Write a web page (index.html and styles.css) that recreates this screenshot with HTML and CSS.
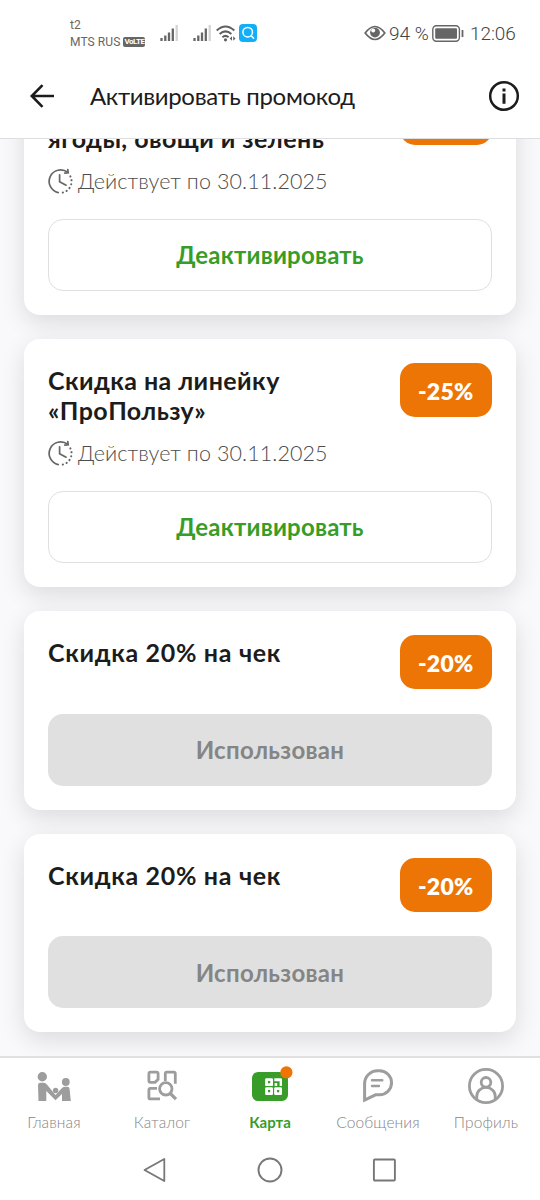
FILE: index.html
```html
<!DOCTYPE html>
<html lang="ru">
<head>
<meta charset="utf-8">
<title>Активировать промокод</title>
<link rel="stylesheet" href="styles.css">
</head>
<body>
<svg width="0" height="0" class="defs">
  <symbol id="clock" viewBox="0 0 25 26"><g fill="none" stroke="#666" stroke-width="1.7" stroke-linecap="round"><path d="M10.2 24.6A11.5 11.5 0 1 1 19.6 4.2"/><path d="M16.8 5.2l3.4-.4-.4-3.2" /><path d="M11.6 6.8v7l6.5 3.4"/><path d="M22.4 8.4A11.5 11.5 0 0 1 12.6 24.9" stroke-width="2.1" stroke-dasharray=".1 3.9"/></g></symbol>
  <symbol id="signal" viewBox="0 0 18 17"><g stroke="#666" stroke-width="2.3"><path d="M1.5 16v-3M5.3 16v-5.5M9 16V7.5M12.8 16V3.5"/><path d="M16.7 16V0" stroke="#d3d3d3"/></g></symbol>
</svg>
<div class="screen">
  <div class="status">
    <div class="carriers"><span class="carrier">t2</span><span class="carrier">MTS RUS <b class="volte">VoLTE</b></span></div>
    <svg class="sig1" width="18" height="17"><use href="#signal"/></svg>
    <svg class="sig2" width="18" height="17"><use href="#signal"/></svg>
    <svg class="wifi" width="20" height="17" viewBox="0 0 20 17"><g fill="none" stroke="#5f5f5f" stroke-width="2"><path d="M.7 5.5Q9.5-2.6 18.3 5.5M3.6 9Q9.5 3.8 15.4 9M6.4 12.2q3.1-2.6 6.2 0"/></g><circle cx="9.5" cy="14.8" r="1.6" fill="#5f5f5f"/><path d="M16 11.2v4.6l-2.3-2.3zM17.2 11.2v4.6l2.3-2.3z" fill="#5f5f5f"/></svg>
    <svg class="search" width="18" height="18" viewBox="0 0 18 18"><rect width="18" height="18" rx="4" fill="#10aff8"/><circle cx="8.7" cy="8.2" r="4.8" fill="none" stroke="#fff" stroke-width="1.5"/><path d="M12.2 11.7l2.4 2.5" stroke="#fff" stroke-width="1.6" stroke-linecap="round"/></svg>
    <svg class="eye" width="22" height="16" viewBox="0 0 22 16"><path d="M1.2 8Q11-5 20.8 8 11 21 1.2 8z" fill="none" stroke="#666" stroke-width="1.7"/><circle cx="11" cy="7.6" r="4.9" fill="#666"/><circle cx="9.2" cy="5.6" r="2" fill="#fff"/></svg>
    <span class="pct">94 %</span>
    <svg class="battery" width="32" height="17" viewBox="0 0 32 17"><rect x=".8" y=".8" width="26.6" height="15.4" rx="3.6" fill="none" stroke="#666" stroke-width="1.4"/><rect x="3.2" y="3.2" width="21.8" height="10.6" rx="1" fill="#666"/><path d="M30.5 5v7" stroke="#666" stroke-width="1.8"/></svg>
    <span class="time">12:06</span>
  </div>
  <header class="header">
    <svg class="back" width="26" height="26" viewBox="0 0 26 26"><path d="M13.5 2.2L2.8 13l10.7 10.8M2.8 13H25" fill="none" stroke="#1c1c1c" stroke-width="2.6"/></svg>
    <h1 class="title">Активировать промокод</h1>
    <svg class="info" width="32" height="32" viewBox="0 0 32 32"><circle cx="16" cy="16" r="13.8" fill="none" stroke="#1c1c1c" stroke-width="2.5"/><path d="M16 13.6v10.2M16 8.5v3" stroke="#1c1c1c" stroke-width="3"/></svg>
  </header>
  <main class="list">
    <article class="card first">
      <div class="top"><h2 class="name">ягоды, овощи и зелень</h2><span class="badge"></span></div>
      <div class="date"><svg width="25" height="26"><use href="#clock"/></svg><span>Действует по 30.11.2025</span></div>
      <button class="btn">Деактивировать</button>
    </article>
    <article class="card">
      <div class="top"><h2 class="name">Скидка на линейку<br>«ПроПользу»</h2><span class="badge">-25%</span></div>
      <div class="date"><svg width="25" height="26"><use href="#clock"/></svg><span>Действует по 30.11.2025</span></div>
      <button class="btn">Деактивировать</button>
    </article>
    <article class="card">
      <div class="top"><h2 class="name short">Скидка 20% на чек</h2><span class="badge">-20%</span></div>
      <button class="btn used">Использован</button>
    </article>
    <article class="card">
      <div class="top"><h2 class="name short">Скидка 20% на чек</h2><span class="badge">-20%</span></div>
      <button class="btn used">Использован</button>
    </article>
  </main>
  <nav class="tabs">
    <a class="tab"><svg width="40" height="40" viewBox="0 0 40 40" fill="#9d9d9d"><circle cx="8.3" cy="10.7" r="4.7"/><circle cx="31.8" cy="16" r="3.9"/><circle cx="21.6" cy="24.5" r="2.7"/><path d="M4 19q0-2.2 2.5-2.2h3.2q2 0 3.2 1.6L21.5 29l6-6.5q1.3-1.7 3.1-1.7h2.8q2 0 2.2 2.2l1.2 12H28v-7l-6.5 6.3L12.3 25v10H4.5z"/></svg><span>Главная</span></a>
    <a class="tab"><svg width="40" height="40" viewBox="0 0 40 40" fill="none" stroke="#9d9d9d" stroke-width="2.8"><path d="M8.4 6.2h6.2q1.5 0 1.5 1.5v5.6l-3 3H8.4q-1.5 0-1.5-1.5V7.7q0-1.5 1.5-1.5zM23.3 15V7.7q0-1.5 1.5-1.5h7q1.5 0 1.5 1.5v10M15 22.4H8.4q-1.5 0-1.5 1.5v7.5q0 1.5 1.5 1.5H18"/><circle cx="23.8" cy="22.8" r="6.2"/><path d="M28.3 27.5l5.7 5.7" stroke-width="3.2"/></svg><span>Каталог</span></a>
    <a class="tab active"><svg width="40" height="40" viewBox="0 0 40 40"><rect x="2" y="6" width="36" height="29" rx="6" fill="#379d28"/><path fill="#fff" d="M16.3 12.2h5.5q1.2 0 1.2 1.2v5.5q0 1.2-1.2 1.2h-5.5q-1.2 0-1.2-1.2v-5.5q0-1.2 1.2-1.2zM24.3 12.2h6.5q1.2 0 1.2 1.2v6.7h-2.4v-4.9h-5.3zM24.6 17h2.6v3.1h-2.6zM16.3 21.3h5.5q1.2 0 1.2 1.2v5.3q0 1.2-1.2 1.2h-5.5q-1.2 0-1.2-1.2v-5.3q0-1.2 1.2-1.2zM25.3 21.3h5.5q1.2 0 1.2 1.2v5.3q0 1.2-1.2 1.2h-5.5q-1.2 0-1.2-1.2v-5.3q0-1.2 1.2-1.2z"/><path fill="#379d28" d="M18 15h2.2v2.2H18zM18 24h2.2v2.2H18zM27 24h2.2v2.2H27z"/><circle cx="36.4" cy="6.4" r="6.1" fill="#ec7505"/></svg><span>Карта</span></a>
    <a class="tab"><svg width="40" height="40" viewBox="0 0 40 40" fill="none" stroke="#9d9d9d" stroke-width="3"><path d="M6.6 34V17.5A13 13 0 0 1 19.5 4.7h2a12 12 0 0 1 0 24.1h-4z"/><path d="M14 14.3h10.3M14 20h7" stroke-linecap="round" stroke-width="2.4"/></svg><span>Сообщения</span></a>
    <a class="tab"><svg width="40" height="40" viewBox="0 0 40 40" fill="none" stroke="#9d9d9d" stroke-width="2.8"><circle cx="20" cy="20" r="16.6"/><circle cx="20" cy="16.3" r="4.8"/><path d="M10.8 33v-3a9.2 8.6 0 0 1 18.4 0v3"/></svg><span>Профиль</span></a>
  </nav>
  <div class="sysnav">
    <svg width="24" height="28" viewBox="0 0 24 28"><path d="M21.3 3v22L1.5 14z" fill="none" stroke="#777" stroke-width="1.8" stroke-linejoin="round"/></svg>
    <svg width="26" height="26" viewBox="0 0 26 26"><circle cx="13" cy="13" r="11.5" fill="none" stroke="#777" stroke-width="1.9"/></svg>
    <svg width="24" height="24" viewBox="0 0 24 24"><rect x=".9" y="1.5" width="21" height="21" rx="1" fill="none" stroke="#777" stroke-width="1.9"/></svg>
  </div>
</div>
</body>
</html>
```
FILE: styles.css
```css
* { box-sizing: border-box; margin: 0; padding: 0; }
body { font-family: "Lato", "Open Sans", sans-serif; background: #fff; color: #1c1c1c; }
svg { display: block; flex: none; overflow: visible; }
.defs { position: absolute; }
.screen { width: 540px; height: 1200px; display: flex; flex-direction: column; overflow: hidden; }
.status { height: 64px; display: flex; align-items: center; padding: 2px 24px 0 70px; color: #666; font-family: Roboto, sans-serif; }
.carriers { width: 90px; display: flex; flex-direction: column; padding-top: 1px; font-size: 12px; line-height: 17px; white-space: nowrap; }
.carrier { display: flex; align-items: center; gap: 3px; letter-spacing: .1px; }
.volte { background: #666; color: #fff; font-size: 8px; line-height: 10px; border-radius: 2px; padding: 0 1px; letter-spacing: -.5px; }
.sig2 { margin-left: 15px; }
.wifi { margin-left: 5px; }
.search { margin-left: 3px; }
.eye { margin-left: 107px; }
.pct, .time { font-size: 19px; white-space: nowrap; font-weight: 300; color: #444; }
.pct { margin-left: 3px; width: 40px; }
.battery { margin-left: 3px; }
.time { margin-left: 6px; letter-spacing: -.1px; }
.header { height: 75px; display: flex; align-items: center; padding: 0 20px 10px 29px; border-bottom: 1.5px solid #dedee0; }
.title { margin-left: 35px; font-size: 24px; font-weight: 400; letter-spacing: -.33px; flex: 1; white-space: nowrap; padding-bottom: 1px; }
.list { height: 917px; overflow: hidden; padding: 0 24px; background: #f9f9fc; display: flex; flex-direction: column; gap: 24px; }
.card { flex: none; background: #fff; border-radius: 16px; padding: 24px; box-shadow: 0 8px 24px rgba(0,0,0,.12); }
.top { display: flex; justify-content: space-between; align-items: flex-start; }
.name { font-size: 25px; line-height: 30px; font-weight: 700; letter-spacing: .44px; padding-top: 2.6px; padding-bottom: 1.4px; white-space: nowrap; }
.short { letter-spacing: .68px; }
.badge { width: 92.5px; height: 54.5px; border-radius: 15px; background: #ec7505; color: #fff; font-size: 23px; font-weight: 800; line-height: 57px; letter-spacing: .3px; text-align: center; }
.first { margin-top: -72.6px; }
.first .name { padding-top: 32.6px; }
.date { display: flex; align-items: center; gap: 5px; margin-top: 12.5px; margin-bottom: -.5px; height: 28px; color: #4c4c4c; font-size: 21.5px; font-weight: 300; letter-spacing: .09px; white-space: nowrap; }
.btn { display: block; width: 100%; height: 72px; margin-top: 24.25px; border: 1.5px solid #dfdfdf; border-radius: 15px; background: #fff; color: #379d28; font: 700 24px "Lato", sans-serif; letter-spacing: .2px; }
.used { border: 0; background: #e0e0e0; color: #858585; letter-spacing: .3px; }
.tabs { height: 84px; border-top: 2px solid #e0e0e1; display: grid; grid-template-columns: repeat(5, 1fr); padding-top: 8px; }
.tab { display: flex; flex-direction: column; align-items: center; color: #858585; font-size: 15.5px; font-weight: 300; letter-spacing: .1px; line-height: 33px; }
.active { color: #379d28; font-weight: 700; font-size: 15px; letter-spacing: 0; }
.sysnav { height: 60px; display: flex; align-items: center; justify-content: center; gap: 90px; }
```
